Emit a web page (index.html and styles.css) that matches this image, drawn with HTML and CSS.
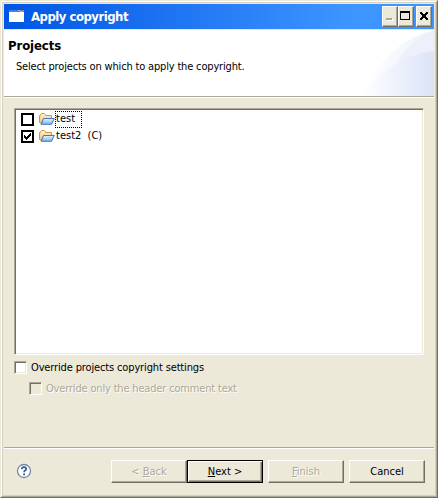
FILE: index.html
```html
<!DOCTYPE html>
<html lang="en">
<head>
<meta charset="utf-8">
<title>Apply copyright</title>
<link rel="stylesheet" href="styles.css">
</head>
<body>
<svg class="defs" width="0" height="0" aria-hidden="true">
  <defs>
    <linearGradient id="fy" x2="0" y2="1"><stop offset="0" stop-color="#fff3c4"/><stop offset="1" stop-color="#efc36b"/></linearGradient>
    <linearGradient id="fb" x2="0" y2="1"><stop offset="0" stop-color="#e4f3ff"/><stop offset="1" stop-color="#78b4ee"/></linearGradient>
    <symbol id="folder" viewBox="0 0 16 12">
      <path d="M.5 9.500V2.500H1.500V1.500L2.500 .5H5.500L6.500 1.500V2.500H12.500V5.500H5L2 10.500Z" fill="url(#fy)" stroke="#c99a50"/>
      <path d="M4.500 5.500H15.300L12.500 11.300H2.200Z" fill="url(#fb)" stroke="#4676bd"/>
    </symbol>
  </defs>
</svg>
<div class="window">
  <div class="frame">
    <header class="titlebar">
      <svg class="app-icon" width="16" height="13" viewBox="0 0 16 13" shape-rendering="crispEdges">
        <path fill="#fffffa" d="M0 0h15v12H0z"/><path fill="#3d82df" d="M0 0h15v2H0z"/><path fill="#94b9e9" d="M9 0h2v1H9zM11 1h2v1h-2z"/><path fill="#e86743" d="M13 0h2v2h-2z"/>
      </svg>
      <h1 class="title"><span>Apply copyright</span></h1>
      <div class="controls">
        <button class="ctl" aria-label="Minimize" disabled><svg width="14" height="18" shape-rendering="crispEdges"><path fill="#fff" d="M4 12h6v2H4z"/><path fill="#aca899" d="M3 11h6v2H3z"/></svg></button>
        <button class="ctl" aria-label="Maximize"><svg width="14" height="18" shape-rendering="crispEdges"><path d="M1 4h10v9H1zM2 6v6h8V6z" fill-rule="evenodd"/></svg></button>
        <button class="ctl close" aria-label="Close"><svg width="14" height="18" shape-rendering="crispEdges"><path d="M3 5h2v1h1v1h2V6h1V5h2v2h-1v1H9v2h1v1h1v2H9v-1H8v-1H6v1H5v1H3v-2h1v-1h1V8H4V7H3z"/></svg></button>
      </div>
    </header>
    <section class="banner">
      <svg class="swoosh" width="80" height="66" viewBox="0 0 80 66">
        <defs><linearGradient id="s1"><stop offset="0" stop-color="#fff"/><stop offset=".55" stop-color="#f5f7fd"/><stop offset="1" stop-color="#eff3fb"/></linearGradient><linearGradient id="s2"><stop offset="0" stop-color="#fff"/><stop offset=".5" stop-color="#edf1fb"/><stop offset="1" stop-color="#dbe3f6"/></linearGradient></defs>
        <path fill="url(#s1)" d="M8 66Q32 12 80 0V66Z"/><path fill="#ebf0fa" d="M42 35Q57 8 80 1V22Q60 25 42 35Z"/><path fill="url(#s2)" d="M8 66Q38 25 80 21V66Z"/>
      </svg>
      <h2><span>Projects</span></h2>
      <p><span>Select projects on which to apply the copyright.</span></p>
    </section>
    <main class="content">
      <ul class="list">
        <li><span class="listcheck"></span><svg class="folder" width="16" height="12"><use href="#folder"/></svg><span class="label focused"><span class="t1">test</span></span></li>
        <li><span class="listcheck"><svg width="9" height="9" shape-rendering="crispEdges"><path d="M1 3h1v1h1v1h1V4h1V3h1V2h1V1h1v3H7v1H6v1H5v1H4v1H3V7H2V6H1z"/></svg></span><svg class="folder" width="16" height="12"><use href="#folder"/></svg><span class="label"><span class="t2">test2&nbsp; (C)</span></span></li>
      </ul>
      <label class="option"><span class="box"></span><span class="o1">Override projects copyright settings</span></label>
      <label class="option sub"><span class="box"></span><span class="o2">Override only the header comment text</span></label>
    </main>
    <footer class="footer">
      <svg class="help" width="16" height="16" viewBox="0 0 16 16"><circle cx="8" cy="8" r="6.500" fill="#fff" stroke="#7187ac" stroke-width="1.300"/><path d="M5.800 6.300V5.800Q6 4.200 8 4.200T10.200 5.900Q10.200 7 9 7.600Q8.100 8.100 8.100 9.300" fill="none" stroke="#34558d" stroke-width="1.700"/><path fill="#34558d" d="M7.200 10.500h1.800v1.700H7.200z"/></svg>
      <button class="btn disabled"><span class="b1">&lt; <u>B</u>ack</span></button>
      <button class="btn default"><span class="b2"><u>N</u>ext &gt;</span></button>
      <button class="btn disabled gap"><span class="b3"><u>F</u>inish</span></button>
      <button class="btn gap"><span class="b4">Cancel</span></button>
    </footer>
  </div>
</div>
</body>
</html>
```
FILE: styles.css
```css
*{box-sizing:border-box}
body{margin:0;font:11px/14px "DejaVu Sans Condensed","DejaVu Sans",sans-serif;font-stretch:condensed;color:#000}
h1,h2,p,ul{margin:0;padding:0}
button{font:inherit;color:inherit;border-radius:0}
.defs{display:block;height:0}
.window{width:438px;height:498px;background:#ece9d8;border:1px solid;border-color:#ece9d8 #716f64 #716f64 #ece9d8}
.frame{width:436px;height:496px;border:1px solid;border-color:#fff #aca899 #aca899 #fff;padding:2px;display:flex;flex-direction:column;box-shadow:inset 0 0 0 1px #d4d0c8}
.titlebar{height:25px;display:flex;align-items:center;background:linear-gradient(90deg,#0055e5,#3d95ff 80%);padding:0 2px 0 5px;flex:none}
.app-icon{margin-right:6px}
.title{flex:1;font-size:13px;line-height:18px;color:#fff;white-space:nowrap;letter-spacing:-.5px}
.controls{display:flex}
.ctl{width:16px;height:21px;padding:0;background:#ece9d8;border:1px solid;border-color:#fff #716f64 #716f64 #fff;box-shadow:inset -1px -1px #aca899;display:flex}
.close{margin-left:2px}
.banner{position:relative;height:68px;background:#fff;border-top:1px solid #ece9d8;border-bottom:1px solid #aca899;padding:8px 4px;flex:none}
.swoosh{position:absolute;right:0;top:0}
h2{font-size:13px;line-height:16px;letter-spacing:-.1px;position:relative}
p{padding:6px 0 0 8px;position:relative;white-space:nowrap;letter-spacing:-.17px}
.content{height:350px;border-top:1px solid #fff;padding:10px 10px 0;flex:none}
.list{height:247px;list-style:none;background:#fff;border:1px solid;border-color:#aca899 #fff #fff #aca899;box-shadow:inset 1px 1px #716f64,inset -1px -1px #ece9d8;padding:2px 6px}
.list li{display:flex;align-items:center;height:17px}
.listcheck{width:13px;height:13px;border:2px solid #000;display:flex}
.folder{margin:0 0 1px 5px}
.label{height:17px;padding:1px 0 0 1px;white-space:pre}
.focused{width:27px;border:1px dotted #000;padding:0}
.option{display:flex;align-items:center;height:13px;margin-top:6px;white-space:nowrap}
.box{width:13px;height:13px;margin-right:4px;background:#fff;border:1px solid;border-color:#aca899 #fff #fff #aca899;box-shadow:inset 1px 1px #716f64,inset -1px -1px #ece9d8;flex:none}
.o1{letter-spacing:-.14px}
.o2{letter-spacing:-.17px}
.sub{margin:8px 0 0 15px;color:#aca899;text-shadow:1px 1px #fff}
.sub .box{background:#ece9d8}
.footer{flex:1;border-top:1px solid #aca899;box-shadow:inset 0 1px #fff;display:flex;align-items:flex-start;padding:12px 8px 0 12px}
.help{margin:3px 79px 0 0}
.btn{width:76px;height:23px;padding:0;background:#ece9d8;border:1px solid;border-color:#fff #716f64 #716f64 #fff;box-shadow:inset -1px -1px #aca899;white-space:nowrap}
.default{border-color:#000;box-shadow:inset 1px 1px #fff,inset -1px -1px #716f64,inset -2px -2px #aca899}
.disabled{color:#aca899;text-shadow:1px 1px #fff}
.gap{margin-left:5px}
```
